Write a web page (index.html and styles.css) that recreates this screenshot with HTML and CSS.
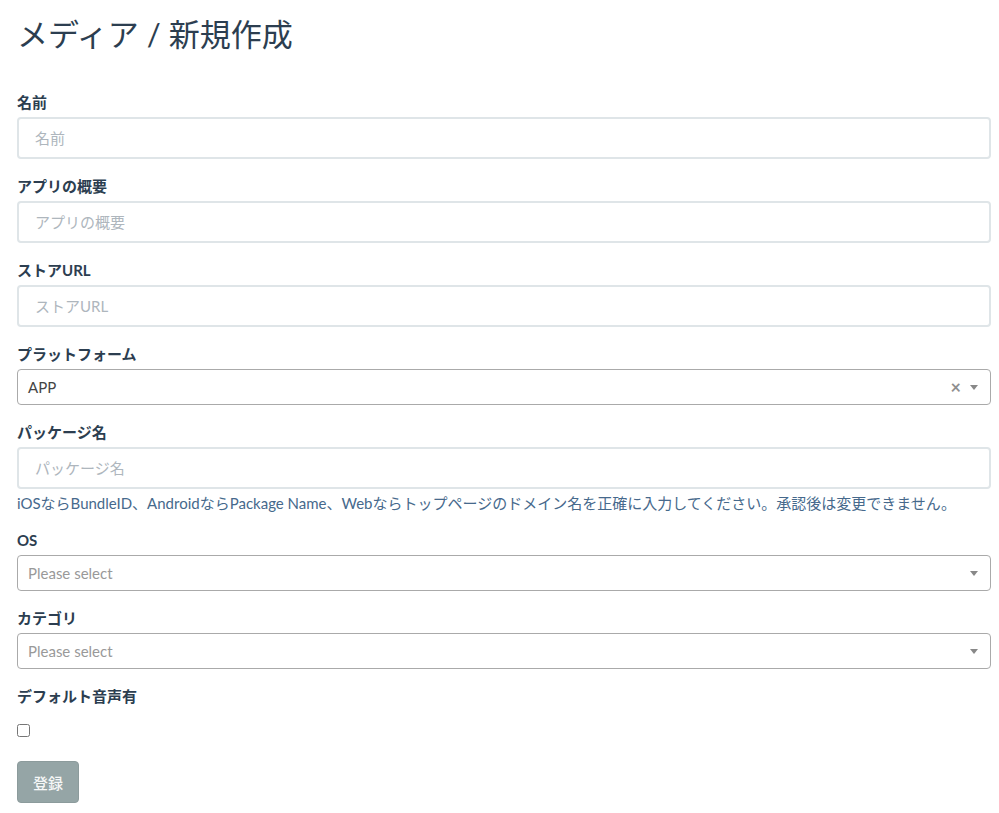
FILE: index.html
```html
<!DOCTYPE html>
<html lang="ja">
<head>
<meta charset="utf-8">
<title>メディア / 新規作成</title>
<link rel="stylesheet" href="styles.css">
</head>
<body>
<main class="page">
  <h2 class="title">メディア / 新規作成</h2>
  <form class="form">
    <div class="group">
      <label class="label">名前</label>
      <input class="control" type="text" placeholder="名前">
    </div>
    <div class="group">
      <label class="label">アプリの概要</label>
      <input class="control" type="text" placeholder="アプリの概要">
    </div>
    <div class="group">
      <label class="label">ストアURL</label>
      <input class="control" type="text" placeholder="ストアURL">
    </div>
    <div class="group">
      <label class="label">プラットフォーム</label>
      <div class="select">
        <span class="select-value">APP</span>
        <span class="select-clear">×</span>
        <span class="select-arrow"></span>
      </div>
    </div>
    <div class="group">
      <label class="label">パッケージ名</label>
      <input class="control" type="text" placeholder="パッケージ名">
      <small class="help">iOSならBundleID、AndroidならPackage Name、Webならトップページのドメイン名を正確に入力してください。承認後は変更できません。</small>
    </div>
    <div class="group">
      <label class="label">OS</label>
      <div class="select">
        <span class="select-placeholder">Please select</span>
        <span class="select-arrow"></span>
      </div>
    </div>
    <div class="group">
      <label class="label">カテゴリ</label>
      <div class="select">
        <span class="select-placeholder">Please select</span>
        <span class="select-arrow"></span>
      </div>
    </div>
    <div class="group check-group">
      <label class="label">デフォルト音声有</label>
      <div class="check-wrap"><input class="check" type="checkbox"></div>
    </div>
    <button class="btn" type="button">登録</button>
  </form>
</main>
</body>
</html>
```

FILE: styles.css
```css
* { box-sizing: border-box; }

html, body {
  margin: 0;
  padding: 0;
  background: #fff;
}

body {
  font-family: Lato, "Noto Sans CJK JP", sans-serif;
  font-size: 15px;
  color: #2c3e50;
}

.page {
  padding: 15px 8px 0 17px;
}

.title {
  margin: 0 0 38px 0;
  font-size: 31px;
  line-height: 38px;
  font-weight: 400;
  color: #2c3e50;
}

.form {
  display: flex;
  flex-direction: column;
}

.group {
  display: flex;
  flex-direction: column;
  margin-bottom: 16px;
}

.label {
  display: block;
  font-weight: 700;
  font-size: 15px;
  line-height: 22px;
  margin-bottom: 4px;
  color: #2c3e50;
}

.control {
  display: block;
  width: 100%;
  height: 42px;
  padding: 0 16px;
  border: 2px solid #dfe5e8;
  border-radius: 4px;
  font-family: Lato, "Noto Sans CJK JP", sans-serif;
  font-size: 15px;
  color: #2c3e50;
  background: #fff;
  outline: none;
}

.control::placeholder {
  color: #aeb6bd;
}

.help {
  display: block;
  margin-top: 4px;
  font-size: 15px;
  line-height: 20px;
  color: #46698c;
}

.select {
  position: relative;
  display: flex;
  align-items: center;
  height: 36px;
  padding: 0 40px 0 10px;
  border: 1px solid #aaa;
  border-radius: 4px;
  background: #fff;
}

.select-value {
  color: #444;
  font-size: 15px;
}

.select-placeholder {
  color: #999;
  font-size: 15px;
}

.select-clear {
  position: absolute;
  right: 29px;
  top: 50%;
  transform: translateY(-52%);
  color: #8f8f8f;
  font-size: 18px;
  font-weight: 700;
  line-height: 1;
}

.select-arrow {
  position: absolute;
  right: 12px;
  top: 50%;
  margin-top: -2px;
  width: 0;
  height: 0;
  border-style: solid;
  border-width: 5px 4px 0 4px;
  border-color: #888 transparent transparent transparent;
}

.check-wrap {
  padding-top: 13px;
  height: 26px;
}

.check {
  display: block;
  margin: 0;
  width: 13px;
  height: 13px;
}

.check-group {
  margin-bottom: 24px;
}

.btn {
  align-self: flex-start;
  width: 62px;
  height: 42px;
  padding: 0;
  border: 1px solid #8c9b9c;
  border-radius: 4px;
  background: #95a5a6;
  color: #f5f7f7;
  font-family: Lato, "Noto Sans CJK JP", sans-serif;
  font-size: 15px;
  font-weight: 500;
}
```
